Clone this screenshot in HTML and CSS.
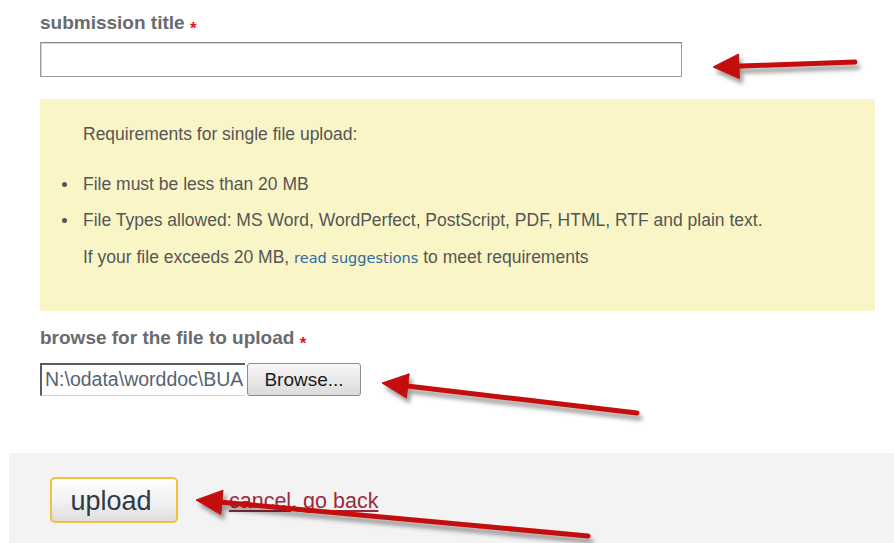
FILE: index.html
```html
<!DOCTYPE html>
<html lang="en">
<head>
<meta charset="utf-8">
<title>Upload submission</title>
<link rel="stylesheet" href="styles.css">
</head>
<body>
<div class="page">
  <form class="upload-form">
    <label class="field-label" for="title">submission title <span class="req">*</span></label>
    <input class="text-input" id="title" type="text">

    <div class="notice">
      <p class="notice-head">Requirements for single file upload:</p>
      <ul class="notice-list">
        <li>File must be less than 20 MB</li>
        <li>File Types allowed: MS Word, WordPerfect, PostScript, PDF, HTML, RTF and plain text.</li>
      </ul>
      <p class="notice-note">If your file exceeds 20 MB, <a href="#" class="note-link">read suggestions</a> to meet requirements</p>
    </div>

    <label class="field-label field-label--file">browse for the file to upload <span class="req">*</span></label>
    <div class="file-picker">
      <span class="file-path">N:\odata\worddoc\BUA</span>
      <button type="button" class="browse-btn">Browse...</button>
    </div>
  </form>

  <div class="actions">
    <button type="button" class="upload-btn">upload</button>
    <a href="#" class="cancel-link">cancel, go back</a>
  </div>

  <!-- red callout arrows drawn over the form -->
  <svg class="callouts" viewBox="0 0 894 543" width="894" height="543" aria-hidden="true">
    <defs>
      <filter id="arrow-shadow" x="-20%" y="-50%" width="140%" height="200%">
        <feDropShadow dx="3" dy="5" stdDeviation="2.2" flood-color="#000" flood-opacity="0.38"/>
      </filter>
    </defs>
    <g class="arrow" filter="url(#arrow-shadow)">
      <line x1="735" y1="66.2" x2="855" y2="62"/>
      <polygon points="713,67 739.4,78.6 738.6,54"/>
    </g>
    <g class="arrow" filter="url(#arrow-shadow)">
      <line x1="405" y1="385.7" x2="637" y2="413"/>
      <polygon points="382,383 406.4,398 409.2,373.8"/>
    </g>
    <g class="arrow" filter="url(#arrow-shadow)">
      <line x1="219" y1="502" x2="588" y2="536"/>
      <polygon points="196,500 220.8,514.6 223,490.2"/>
    </g>
  </svg>
</div>
</body>
</html>
```

FILE: styles.css
```css
* {
  box-sizing: border-box;
}

html,
body {
  margin: 0;
  background: #fff;
}

body {
  font-family: "Liberation Sans", Arial, sans-serif;
}

.page {
  position: relative;
  width: 894px;
  height: 543px;
  overflow: hidden;
}

/* ---------- form ---------- */

.upload-form {
  display: flex;
  flex-direction: column;
  align-items: flex-start;
  padding: 12px 0 0 40px;
}

.field-label {
  display: block;
  height: 22px;
  font-size: 19px;
  line-height: 22px;
  font-weight: bold;
  color: #696b6e;
}

.field-label--file {
  margin-top: 16px;
}

.req {
  color: #e8141b;
  font-size: 17px;
  line-height: 0;
  vertical-align: -5px;
}

.text-input {
  margin-top: 8px;
  width: 642px;
  height: 35px;
  border: 1px solid #9a9a9a;
  border-top-color: #8a8a8a;
  box-shadow: inset 1px 1px 0 #d4d4d4;
  background: #fff;
}

/* ---------- requirements box ---------- */

.notice {
  margin-top: 22px;
  width: 835px;
  height: 212px;
  padding: 25px 0 0 43px;
  background: #faf5c7;
  color: #555;
  font-size: 17.5px;
  line-height: 20px;
}

.notice-head {
  margin: 0 0 30px;
}

.notice-list {
  margin: 0;
  padding: 0;
  list-style: none;
}

.notice-list li {
  display: flex;
  align-items: center;
  margin-bottom: 16px;
}

.notice-list li::before {
  content: "";
  flex: none;
  width: 5px;
  height: 5px;
  margin: 1px 16px 0 -21px;
  border-radius: 50%;
  background: #555;
}

.notice-note {
  margin: 17px 0 0;
}

.note-link {
  color: #2e6a9e;
  text-decoration: none;
  font-family: "DejaVu Sans", Verdana, sans-serif;
  font-size: 14.5px;
}

/* ---------- file picker ---------- */

.file-picker {
  display: flex;
  margin-top: 14px;
  height: 33px;
}

.file-path {
  display: block;
  width: 205px;
  height: 33px;
  padding: 0 0 0 3px;
  overflow: hidden;
  white-space: nowrap;
  border-style: solid;
  border-width: 2px 0 1px 2px;
  border-color: #5c5c5c #d0d0d0 #d0d0d0 #5c5c5c;
  background: #fff;
  color: #566372;
  font-size: 19.5px;
  line-height: 29px;
}

.browse-btn {
  margin-left: 2px;
  width: 114px;
  height: 33px;
  padding: 0;
  border: 1px solid #8c8c8c;
  border-radius: 3px;
  background: linear-gradient(#f7f7f7, #e9e9e9 50%, #dadada);
  color: #1c1c1c;
  font-family: "Liberation Sans", Arial, sans-serif;
  font-size: 19px;
}

/* ---------- footer actions ---------- */

.actions {
  display: flex;
  align-items: flex-start;
  margin: 57px 0 0 9px;
  height: 100px;
  padding: 24px 0 0 41px;
  background: #f3f3f3;
}

.upload-btn {
  width: 128px;
  height: 46px;
  padding: 2px 6px 0 0;
  border: 2px solid #f0c23a;
  border-radius: 5px;
  background: linear-gradient(#fefefe, #f1f1f1 55%, #dedede);
  color: #2f3a48;
  font-family: "Liberation Sans", Arial, sans-serif;
  font-size: 27px;
}

.cancel-link {
  margin: 11px 0 0 51px;
  color: #9b2a3c;
  font-size: 21.5px;
  line-height: 26px;
  text-decoration: underline;
}

/* ---------- callouts ---------- */

.callouts {
  position: absolute;
  top: 0;
  left: 0;
  pointer-events: none;
}

.arrow line {
  stroke: #c40a0a;
  stroke-width: 5;
  stroke-linecap: round;
}

.arrow polygon {
  fill: #c40a0a;
  stroke: #c40a0a;
  stroke-width: 1;
  stroke-linejoin: round;
}
```
